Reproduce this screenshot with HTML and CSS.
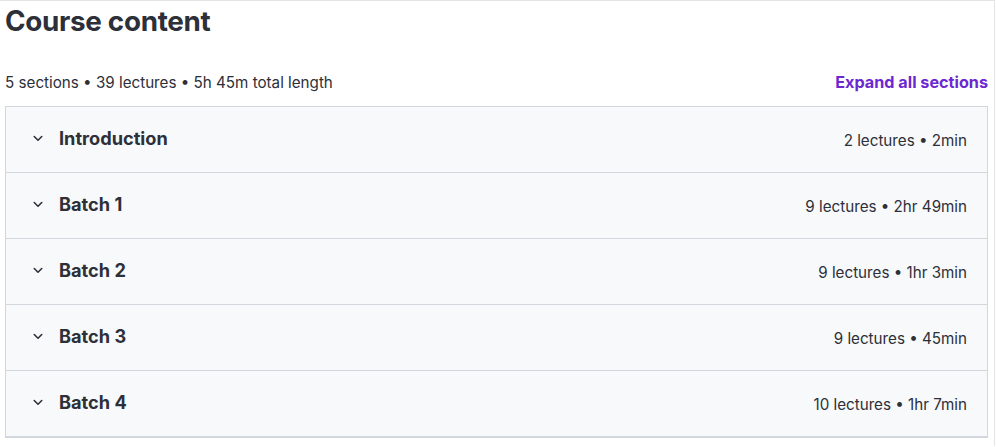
FILE: index.html
```html
<!DOCTYPE html>
<html>
<head>
<meta charset="utf-8">
<link rel="stylesheet" href="styles.css">
</head>
<body>
<div class="page">
  <h2 class="title">Course content</h2>
  <div class="meta-row">
    <span class="meta">5 sections • 39 lectures • 5h 45m total length</span>
    <button class="expand">Expand all sections</button>
  </div>
  <div class="sections">
    <div class="section">
      <div class="left"><svg class="chev" viewBox="0 0 24 24"><path d="M7 10l5 5 5-5"/></svg><span class="name">Introduction</span></div>
      <span class="info">2 lectures • 2min</span>
    </div>
    <div class="section">
      <div class="left"><svg class="chev" viewBox="0 0 24 24"><path d="M7 10l5 5 5-5"/></svg><span class="name">Batch 1</span></div>
      <span class="info">9 lectures • 2hr 49min</span>
    </div>
    <div class="section">
      <div class="left"><svg class="chev" viewBox="0 0 24 24"><path d="M7 10l5 5 5-5"/></svg><span class="name">Batch 2</span></div>
      <span class="info">9 lectures • 1hr 3min</span>
    </div>
    <div class="section">
      <div class="left"><svg class="chev" viewBox="0 0 24 24"><path d="M7 10l5 5 5-5"/></svg><span class="name">Batch 3</span></div>
      <span class="info">9 lectures • 45min</span>
    </div>
    <div class="section">
      <div class="left"><svg class="chev" viewBox="0 0 24 24"><path d="M7 10l5 5 5-5"/></svg><span class="name">Batch 4</span></div>
      <span class="info">10 lectures • 1hr 7min</span>
    </div>
  </div>
</div>
</body>
</html>
```
FILE: styles.css
```css
html, body {
  margin: 0;
  padding: 0;
  background: #fff;
}
body {
  font-family: Inter, "Noto Sans", sans-serif;
  color: #2d2f31;
}
.page {
  width: 995px;
  height: 446px;
  border-top: 1px solid #e4e4e4;
  border-right: 1px solid #e4e4e4;
  box-sizing: border-box;
  padding: 0 6px 0 5px;
}
.title {
  margin: 0;
  padding-top: 4px;
  font-size: 27.8px;
  font-weight: 700;
  line-height: 33px;
  letter-spacing: -0.3px;
  color: #2d2f39;
}
.meta-row {
  display: flex;
  justify-content: space-between;
  align-items: center;
  margin-top: 32px;
  height: 24px;
  margin-bottom: 12px;
}
.meta {
  font-size: 15.2px;
  color: #2d2f39;
}
.expand {
  border: 0;
  background: none;
  padding: 0;
  font-family: inherit;
  font-size: 16.2px;
  font-weight: 700;
  color: #6d28d2;
}
.sections {
  border: 1px solid #d1d7dc;
  border-bottom-width: 2px;
  background: #f7f9fa;
}
.section {
  display: flex;
  justify-content: space-between;
  align-items: center;
  height: 65px;
  padding: 0 20px 0 23px;
  border-bottom: 1px solid #d1d7dc;
}
.section:last-child {
  border-bottom: 0;
}
.left {
  display: flex;
  align-items: center;
  margin-top: -4px;
}
.chev {
  width: 18px;
  height: 18px;
  fill: none;
  stroke: #2d2f39;
  stroke-width: 2.1;
  stroke-linecap: round;
  stroke-linejoin: round;
  margin-right: 12px;
}
.name {
  font-size: 18.2px;
  font-weight: 700;
  color: #2d2f39;
}
.info {
  font-size: 15.2px;
  color: #2d2f39;
  margin-top: 1px;
}
```
